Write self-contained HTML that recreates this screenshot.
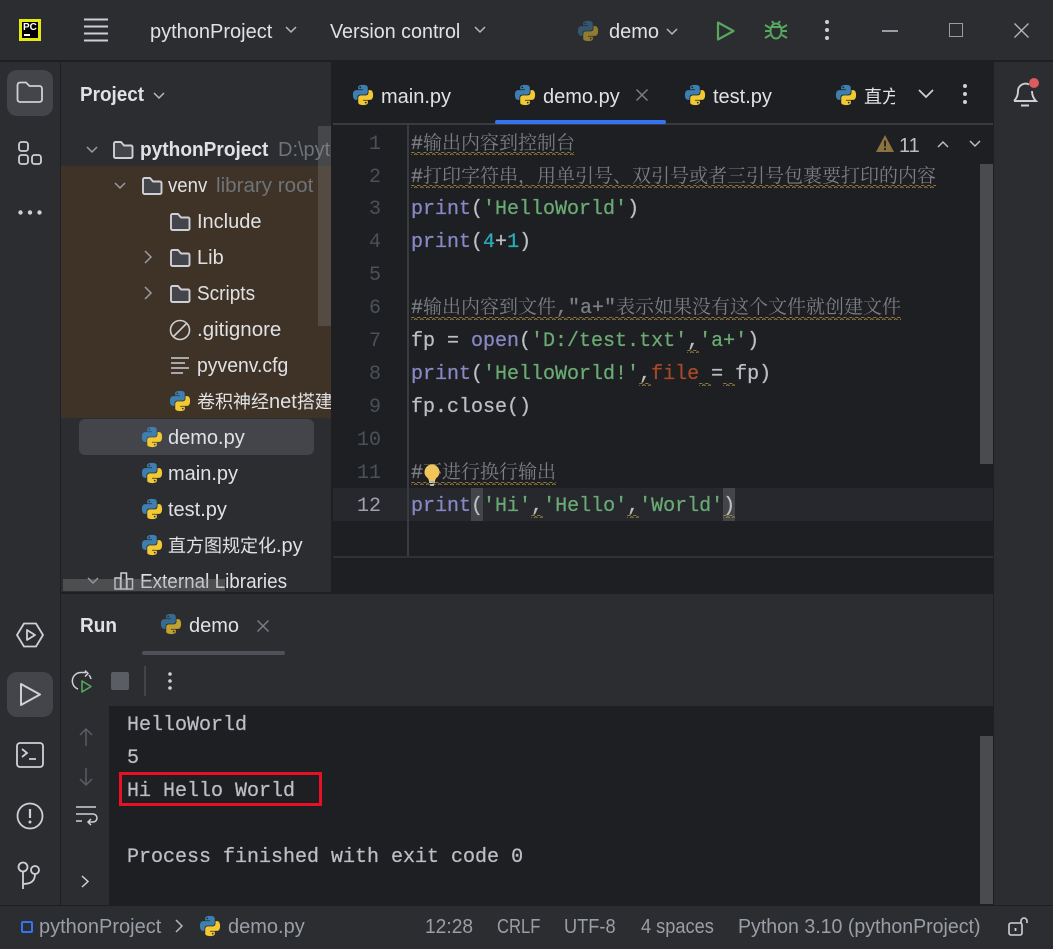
<!DOCTYPE html>
<html><head><meta charset="utf-8"><style>
html,body{margin:0;padding:0;background:#2b2d30;}
#r{position:relative;width:1053px;height:949px;overflow:hidden;background:#2b2d30;font-family:"Liberation Sans","Noto Sans CJK SC",sans-serif;font-size:20px;color:#dfe1e5;}
.a{position:absolute;}
.t{position:absolute;white-space:nowrap;height:24px;line-height:24px;margin-top:1px;transform-origin:0 0;}
.t b{font-weight:normal;font-size:18px;line-height:0;}
.c{position:absolute;left:411px;height:33px;line-height:33px;margin-top:1px;white-space:pre;font-family:"Liberation Mono",monospace;font-size:20px;color:#bcbec4;-webkit-text-stroke:.25px currentColor;}
.c i{font-style:normal;font-family:"Noto Serif CJK SC","Noto Sans CJK SC",serif;font-size:19px;line-height:0;-webkit-text-stroke:0;}
.m{color:#7a7e85;}.p{color:#8888c6;}.s{color:#6aab73;}.n{color:#2aacb8;}.f{color:#aa4926;}
.l{position:absolute;left:333px;width:48px;text-align:right;height:33px;line-height:33px;margin-top:1px;font-family:"Liberation Mono",monospace;font-size:20px;color:#4b5059;}
.o{position:absolute;left:127px;height:33px;line-height:33px;margin-top:1px;white-space:pre;font-family:"Liberation Mono",monospace;font-size:20px;color:#bcbec4;-webkit-text-stroke:.25px currentColor;}
svg{position:absolute;overflow:visible;}
.g{color:#6f737a;}
.st{color:#9a9ea6;}
</style></head><body><div id="r">
<svg width="0" height="0" style="left:0;top:0"><defs>
<symbol id="py" viewBox="0 0 24 24"><path fill="#3d7fb0" d="M11.9 1C6.4 1 6.7 3.4 6.7 3.4v2.5h5.3v.8H4.6S1 6.3 1 11.9s3.1 5.4 3.1 5.4H6v-2.6s-.1-3.1 3.1-3.1h5.2s2.9 0 2.9-2.9V3.9S17.7 1 11.9 1zM9 2.7a.95.95 0 1 1 0 1.9.95.95 0 0 1 0-1.9z"/><path fill="#f2c932" d="M12.1 23c5.5 0 5.2-2.4 5.2-2.4v-2.5H12v-.8h7.4s3.6.4 3.6-5.2-3.1-5.4-3.1-5.4H18v2.6s.1 3.1-3.1 3.1H9.7s-2.9 0-2.9 2.9v4.8S6.3 23 12.1 23zM15 21.3a.95.95 0 1 1 0-1.9.95.95 0 0 1 0 1.9z"/></symbol>
<symbol id="fo" viewBox="0 0 22 20"><path d="M2 3.500a1.500 1.500 0 0 1 1.500-1.500h5.500l3 3.500h7a1.500 1.500 0 0 1 1.500 1.500v9.500a1.500 1.500 0 0 1-1.500 1.500H3.500a1.500 1.500 0 0 1-1.500-1.500z" fill="#43454a" stroke="#ced0d6" stroke-width="1.900" stroke-linejoin="round"/></symbol>
<pattern id="sq" width="6" height="3" patternUnits="userSpaceOnUse"><path d="M0 2.4Q1.5 -.4 3 1.5T6 2.4" fill="none" stroke="#a3843c" stroke-width="1"/></pattern>
</defs></svg>

<!-- title bar -->
<div class="a" style="left:0;top:60px;width:1053px;height:2px;background:#1e1f22"></div>
<div class="a" style="left:19px;top:19px;width:22px;height:22px;background:#e4ea10"></div>
<div class="a" style="left:22px;top:22px;width:16px;height:16px;background:#000"></div>
<div class="t" style="left:23px;top:14.500px;font-size:10px;font-weight:bold;color:#fff">PC</div>
<div class="a" style="left:24px;top:34px;width:6px;height:1.500px;background:#fff"></div>
<svg style="left:84px;top:18px" width="24" height="24"><path d="M0 1.500h24M0 8.500h24M0 15.500h24M0 22.500h24" stroke="#ced0d6" stroke-width="2"/></svg>
<div class="t" style="left:150px;top:19px">pythonProject</div>
<svg style="left:285px;top:26px" width="12" height="8"><path d="M1 1l5 5 5-5" fill="none" stroke="#b4b8bf" stroke-width="1.500"/></svg>
<div class="t" style="left:330px;top:19px;transform:scaleX(.985)">Version control</div>
<svg style="left:474px;top:26px" width="12" height="8"><path d="M1 1l5 5 5-5" fill="none" stroke="#b4b8bf" stroke-width="1.500"/></svg>
<svg style="left:577px;top:20px;opacity:.5" width="22" height="22"><use href="#py"/></svg>
<div class="t" style="left:609px;top:19px">demo</div>
<svg style="left:666px;top:28px" width="12" height="8"><path d="M1 1l5 5 5-5" fill="none" stroke="#b4b8bf" stroke-width="1.500"/></svg>
<svg style="left:716px;top:20px" width="20" height="22"><path d="M2 2.500v17l15.500-8.500z" fill="none" stroke="#57a75f" stroke-width="2.200" stroke-linejoin="round"/></svg>
<svg style="left:764px;top:19px" width="24" height="22"><g fill="none" stroke="#57a75f" stroke-width="2"><ellipse cx="12" cy="12" rx="5.500" ry="7.500"/><path d="M7 8h10M8 2l2 3M16 2l-2 3M1 6l5 3M23 6l-5 3M1 12h5M23 12h-5M1 19l5-3M23 19l-5-3"/></g></svg>
<svg style="left:824px;top:20px" width="6" height="20"><circle cx="3" cy="2" r="2" fill="#ced0d6"/><circle cx="3" cy="10" r="2" fill="#ced0d6"/><circle cx="3" cy="18" r="2" fill="#ced0d6"/></svg>
<div class="a" style="left:882px;top:30px;width:16px;height:1.500px;background:#9a9da3"></div>
<div class="a" style="left:949px;top:23px;width:12px;height:12px;border:1.500px solid #9a9da3"></div>
<svg style="left:1014px;top:23px" width="15" height="15"><path d="M.5.5l14 14M14.500.5l-14 14" stroke="#b0b3b8" stroke-width="1.400"/></svg>

<!-- left strip -->
<div class="a" style="left:60px;top:62px;width:1px;height:844px;background:#1e1f22"></div>
<div class="a" style="left:7px;top:70px;width:46px;height:46px;border-radius:10px;background:#43454a"></div>
<svg style="left:16px;top:81px" width="28" height="24"><path d="M1.500 4a2.500 2.500 0 0 1 2.500-2.500h6l3.500 3.500h10a2.500 2.500 0 0 1 2.500 2.500v11a2.500 2.500 0 0 1-2.500 2.500H4a2.500 2.500 0 0 1-2.500-2.500z" fill="none" stroke="#ced0d6" stroke-width="1.800"/></svg>
<svg style="left:18px;top:141px" width="24" height="24"><g fill="none" stroke="#ced0d6" stroke-width="1.800"><rect x="1" y="1" width="9" height="9" rx="2.500"/><rect x="1" y="14" width="9" height="9" rx="2.500"/><rect x="14" y="14" width="9" height="9" rx="2.500"/></g></svg>
<svg style="left:18px;top:210px" width="24" height="5"><circle cx="2.500" cy="2.500" r="2.200" fill="#ced0d6"/><circle cx="12" cy="2.500" r="2.200" fill="#ced0d6"/><circle cx="21.500" cy="2.500" r="2.200" fill="#ced0d6"/></svg>
<svg style="left:16px;top:622px" width="28" height="26"><path d="M8 1.500h12L27 13l-7 11.500H8L1 13z" fill="none" stroke="#ced0d6" stroke-width="1.800" stroke-linejoin="round"/><path d="M11 8v10l8-5z" fill="none" stroke="#ced0d6" stroke-width="1.800" stroke-linejoin="round"/></svg>
<div class="a" style="left:7px;top:672px;width:46px;height:45px;border-radius:10px;background:#43454a"></div>
<svg style="left:19px;top:682px" width="24" height="26"><path d="M2 2v21l19-10.500z" fill="none" stroke="#ced0d6" stroke-width="2" stroke-linejoin="round"/></svg>
<svg style="left:16px;top:742px" width="28" height="26"><rect x="1" y="1" width="26" height="24" rx="3" fill="none" stroke="#ced0d6" stroke-width="1.800"/><path d="M6 7l5 4-5 4M13 17h7" fill="none" stroke="#ced0d6" stroke-width="1.800"/></svg>
<svg style="left:16px;top:802px" width="28" height="28"><circle cx="14" cy="14" r="12.500" fill="none" stroke="#ced0d6" stroke-width="1.800"/><path d="M14 7v9" stroke="#ced0d6" stroke-width="2.200"/><circle cx="14" cy="20" r="1.500" fill="#ced0d6"/></svg>
<svg style="left:17px;top:861px" width="26" height="30"><g fill="none" stroke="#ced0d6" stroke-width="1.800"><circle cx="6" cy="6" r="4.500"/><circle cx="18" cy="9" r="4"/><path d="M6 11v17M6 23c8 0 12-3 12-10"/></g></svg>

<!-- project panel -->
<div class="a" id="pj" style="left:61px;top:62px;width:270px;height:530px;overflow:hidden;background:#2b2d30">
<div class="a" style="left:0;top:104px;width:270px;height:252px;background:#3f3226"></div>
<div class="a" style="left:18px;top:357px;width:235px;height:36px;border-radius:6px;background:#43454a"></div>
<div class="t" style="left:19px;top:20px;font-weight:bold;transform:scaleX(.945)">Project</div>
<svg style="left:92px;top:30px" width="12" height="8"><path d="M1 1l5 5 5-5" fill="none" stroke="#b4b8bf" stroke-width="1.500"/></svg>
<svg style="left:25px;top:84px" width="12" height="8"><path d="M1 1l5 5 5-5" fill="none" stroke="#9a9da3" stroke-width="1.500"/></svg>
<svg style="left:51px;top:78px" width="22" height="20"><use href="#fo"/></svg>
<div class="t" style="left:79px;top:75px;font-weight:bold;transform:scaleX(.955)">pythonProject</div>
<div class="t g" style="left:217px;top:75px">D:\pyt</div>
<svg style="left:53px;top:120px" width="12" height="8"><path d="M1 1l5 5 5-5" fill="none" stroke="#9a9da3" stroke-width="1.500"/></svg>
<svg style="left:80px;top:114px" width="22" height="20"><use href="#fo"/></svg>
<div class="t" style="left:107px;top:111px;transform:scaleX(.93)">venv</div>
<div class="t g" style="left:155px;top:111px;transform:scaleX(1.03)">library root</div>
<svg style="left:108px;top:150px" width="22" height="20"><use href="#fo"/></svg>
<div class="t" style="left:136px;top:147px">Include</div>
<svg style="left:83px;top:188px" width="8" height="14"><path d="M1 1l6 6-6 6" fill="none" stroke="#9a9da3" stroke-width="1.500"/></svg>
<svg style="left:108px;top:186px" width="22" height="20"><use href="#fo"/></svg>
<div class="t" style="left:136px;top:183px">Lib</div>
<svg style="left:83px;top:224px" width="8" height="14"><path d="M1 1l6 6-6 6" fill="none" stroke="#9a9da3" stroke-width="1.500"/></svg>
<svg style="left:108px;top:222px" width="22" height="20"><use href="#fo"/></svg>
<div class="t" style="left:136px;top:219px;transform:scaleX(.95)">Scripts</div>
<svg style="left:108px;top:257px" width="22" height="22"><circle cx="11" cy="11" r="9.500" fill="none" stroke="#ced0d6" stroke-width="1.600"/><path d="M4.500 17.500l13-13" stroke="#ced0d6" stroke-width="1.600"/></svg>
<div class="t" style="left:136px;top:255px;transform:scaleX(1.025)">.gitignore</div>
<svg style="left:109px;top:295px" width="20" height="18"><path d="M1 1h18M1 6h14M1 11h18M1 16h12" stroke="#ced0d6" stroke-width="1.500"/></svg>
<div class="t" style="left:136px;top:291px;transform:scaleX(.97)">pyvenv.cfg</div>
<svg style="left:108px;top:328px" width="22" height="22"><use href="#py"/></svg>
<div class="t" style="left:136px;top:327px"><b>卷积神经</b>net<b>搭建</b></div>
<svg style="left:80px;top:364px" width="22" height="22"><use href="#py"/></svg>
<div class="t" style="left:107px;top:363px">demo.py</div>
<svg style="left:80px;top:400px" width="22" height="22"><use href="#py"/></svg>
<div class="t" style="left:107px;top:399px">main.py</div>
<svg style="left:80px;top:436px" width="22" height="22"><use href="#py"/></svg>
<div class="t" style="left:107px;top:435px">test.py</div>
<svg style="left:80px;top:472px" width="22" height="22"><use href="#py"/></svg>
<div class="t" style="left:107px;top:471px"><b>直方图规定化</b>.py</div>
<svg style="left:26px;top:515px" width="12" height="8"><path d="M1 1l5 5 5-5" fill="none" stroke="#9a9da3" stroke-width="1.500"/></svg>
<svg style="left:53px;top:510px" width="20" height="18"><g fill="none" stroke="#ced0d6" stroke-width="1.500"><rect x="1" y="6" width="5.500" height="11"/><rect x="7" y="1" width="5.500" height="16"/><rect x="13" y="7" width="5.500" height="10"/></g></svg>
<div class="t" style="left:79px;top:507px;transform:scaleX(.945)">External Libraries</div>
<div class="a" style="left:257px;top:64px;width:13px;height:200px;background:rgba(140,140,140,.28)"></div>
<div class="a" style="left:2px;top:517px;width:162px;height:12px;background:rgba(140,140,140,.35)"></div>
</div>
<div class="a" style="left:331px;top:62px;width:2px;height:530px;background:#1e1f22"></div>

<!-- editor -->
<div class="a" id="ed" style="left:333px;top:62px;width:660px;height:530px;background:#1e1f22"></div>
<div class="a" style="left:333px;top:123px;width:660px;height:2px;background:#393b40"></div>
<div class="a" style="left:495px;top:120px;width:171px;height:4px;border-radius:2px;background:#3574f0"></div>
<svg style="left:352px;top:84px" width="22" height="22"><use href="#py"/></svg>
<div class="t" style="left:381px;top:84px">main.py</div>
<svg style="left:514px;top:84px" width="22" height="22"><use href="#py"/></svg>
<div class="t" style="left:543px;top:84px">demo.py</div>
<svg style="left:636px;top:89px" width="12" height="12"><path d="M.5.5l11 11M11.500.5l-11 11" stroke="#7a7e85" stroke-width="1.500"/></svg>
<svg style="left:684px;top:84px" width="22" height="22"><use href="#py"/></svg>
<div class="t" style="left:713px;top:84px">test.py</div>
<svg style="left:835px;top:84px" width="22" height="22"><use href="#py"/></svg>
<div class="a" style="left:864px;top:84px;width:31px;height:26px;overflow:hidden"><div class="t" style="left:0;top:0"><b>直方图规定化</b>.py</div></div>
<svg style="left:918px;top:89px" width="16" height="10"><path d="M1 1l7 7 7-7" fill="none" stroke="#ced0d6" stroke-width="1.700"/></svg>
<svg style="left:962px;top:84px" width="6" height="20"><circle cx="3" cy="2" r="2" fill="#ced0d6"/><circle cx="3" cy="10" r="2" fill="#ced0d6"/><circle cx="3" cy="18" r="2" fill="#ced0d6"/></svg>

<div class="a" style="left:333px;top:488px;width:660px;height:33px;background:#26282e"></div>
<div class="a" style="left:407px;top:125px;width:2px;height:431px;background:#393b40"></div>
<div class="a" style="left:333px;top:556px;width:660px;height:2px;background:#2f3134"></div>
<div class="a" style="left:471px;top:488px;width:12px;height:33px;background:#43454a"></div>
<div class="a" style="left:723px;top:488px;width:12px;height:33px;background:#43454a"></div>

<div class="l" style="top:127px">1</div><div class="l" style="top:160px">2</div><div class="l" style="top:192px">3</div><div class="l" style="top:225px">4</div><div class="l" style="top:258px">5</div><div class="l" style="top:291px">6</div><div class="l" style="top:324px">7</div><div class="l" style="top:357px">8</div><div class="l" style="top:390px">9</div><div class="l" style="top:423px">10</div><div class="l" style="top:456px">11</div><div class="l" style="top:489px;color:#a1a3ab">12</div>

<div class="c m" style="top:127px">#<i>输出内容到控制台</i></div>
<div class="c m" style="top:160px">#<i>打印字符串，用单引号、双引号或者三引号包裹要打印的内容</i></div>
<div class="c" style="top:192px"><span class="p">print</span>(<span class="s">'HelloWorld'</span>)</div>
<div class="c" style="top:225px"><span class="p">print</span>(<span class="n">4</span>+<span class="n">1</span>)</div>
<div class="c m" style="top:291px">#<i>输出内容到文件</i>,"a+"<i>表示如果没有这个文件就创建文件</i></div>
<div class="c" style="top:324px">fp = <span class="p">open</span>(<span class="s">'D:/test.txt'</span>,<span class="s">'a+'</span>)</div>
<div class="c" style="top:357px"><span class="p">print</span>(<span class="s">'HelloWorld!'</span>,<span class="f">file</span> = fp)</div>
<div class="c" style="top:390px">fp.close()</div>
<div class="c m" style="top:456px">#<i>不进行换行输出</i></div>
<div class="c" style="top:489px"><span class="p">print</span>(<span class="s">'Hi'</span>,<span class="s">'Hello'</span>,<span class="s">'World'</span>)</div>

<svg style="left:0;top:0" width="1053" height="949"><g fill="url(#sq)">
<rect x="411" y="152" width="163" height="3"/><rect x="411" y="185" width="525" height="3"/><rect x="411" y="317" width="490" height="3"/><rect x="411" y="482" width="145" height="3"/>
<rect x="687" y="350" width="12" height="3"/><rect x="639" y="383" width="12" height="3"/><rect x="699" y="383" width="12" height="3"/><rect x="723" y="383" width="12" height="3"/>
<rect x="531" y="515" width="12" height="3"/><rect x="627" y="515" width="12" height="3"/><rect x="723" y="515" width="12" height="3"/></g>
<circle cx="432" cy="472" r="7.500" fill="#f2c55c"/><path d="M428 478h8l-1 3h-6z" fill="#f2c55c"/><path d="M429 482h6M430 485h4" stroke="#dfe1e5" stroke-width="1.500"/></svg>

<div class="a" style="left:980px;top:164px;width:13px;height:300px;background:#4a4b4e"></div>
<svg style="left:876px;top:135px" width="18" height="17"><path d="M9 0L18 17H0z" fill="#8a7340"/><path d="M9 5.500v6M9 13v2" stroke="#1e1f22" stroke-width="1.800"/></svg>
<div class="t" style="left:899px;top:133px;color:#bcbec4">11</div>
<svg style="left:937px;top:140px" width="12" height="8"><path d="M1 7l5-5 5 5" fill="none" stroke="#bcbec4" stroke-width="1.500"/></svg>
<svg style="left:969px;top:140px" width="12" height="8"><path d="M1 1l5 5 5-5" fill="none" stroke="#bcbec4" stroke-width="1.500"/></svg>

<!-- right strip -->
<div class="a" style="left:993px;top:62px;width:1px;height:844px;background:#1e1f22"></div>
<svg style="left:1011px;top:78px" width="30" height="30"><path d="M3 23h22Q21 19 21 13M3 23Q7 19 7 13A7.500 7.500 0 0 1 18 6.500" fill="none" stroke="#ced0d6" stroke-width="1.900"/><path d="M10 27.500h8" stroke="#ced0d6" stroke-width="2"/><circle cx="23" cy="5" r="5" fill="#db5c5c"/></svg>

<!-- run panel -->
<div class="a" style="left:61px;top:592px;width:932px;height:2px;background:#1e1f22"></div>
<div class="t" style="left:80px;top:613px;font-weight:bold;transform:scaleX(.95)">Run</div>
<svg style="left:160px;top:613px;opacity:.75" width="22" height="22"><use href="#py"/></svg>
<div class="t" style="left:189px;top:613px">demo</div>
<svg style="left:257px;top:620px" width="12" height="12"><path d="M.5.5l11 11M11.500.5l-11 11" stroke="#7a7e85" stroke-width="1.500"/></svg>
<div class="a" style="left:142px;top:651px;width:143px;height:4px;border-radius:2px;background:#4e5157"></div>
<svg style="left:71px;top:670px" width="24" height="24"><path d="M15 2.500h-5a8.500 8.500 0 0 0-3 16.500" fill="none" stroke="#ced0d6" stroke-width="1.500"/><path d="M14 .5l3 3-3 3M18 5a8 8 0 0 1 2 4" fill="none" stroke="#ced0d6" stroke-width="1.500"/><path d="M11 11v11l9-5.500z" fill="none" stroke="#57a75f" stroke-width="1.600" stroke-linejoin="round"/></svg>
<div class="a" style="left:111px;top:672px;width:18px;height:18px;border-radius:2px;background:#5a5d63"></div>
<div class="a" style="left:144px;top:666px;width:2px;height:30px;background:#43454a"></div>
<svg style="left:167px;top:672px" width="6" height="18"><circle cx="3" cy="2" r="1.800" fill="#ced0d6"/><circle cx="3" cy="9" r="1.800" fill="#ced0d6"/><circle cx="3" cy="16" r="1.800" fill="#ced0d6"/></svg>
<div class="a" style="left:109px;top:706px;width:884px;height:200px;background:#1e1f22"></div>
<svg style="left:79px;top:728px" width="14" height="18"><path d="M7 18V1M1 7l6-6 6 6" fill="none" stroke="#5a5d63" stroke-width="1.500"/></svg>
<svg style="left:79px;top:768px" width="14" height="18"><path d="M7 0v17M1 11l6 6 6-6" fill="none" stroke="#5a5d63" stroke-width="1.500"/></svg>
<svg style="left:75px;top:806px" width="22" height="19"><path d="M1 1h20M1 8h17a3.500 3.500 0 0 1 0 8h-5M1 15h6M16 13l-3 3 3 3" fill="none" stroke="#ced0d6" stroke-width="1.500"/></svg>
<svg style="left:81px;top:875px" width="8" height="13"><path d="M1 1l6 5.500-6 5.500" fill="none" stroke="#ced0d6" stroke-width="1.500"/></svg>
<div class="o" style="top:708px">HelloWorld</div>
<div class="o" style="top:741px">5</div>
<div class="o" style="top:774px">Hi Hello World</div>
<div class="o" style="top:840px">Process finished with exit code 0</div>
<div class="a" style="left:119px;top:772px;width:197px;height:28px;border:3px solid #e81123"></div>
<div class="a" style="left:980px;top:736px;width:13px;height:168px;background:#4a4b4e"></div>

<!-- status bar -->
<div class="a" style="left:0;top:905px;width:1053px;height:1px;background:#1e1f22"></div>
<div class="a" style="left:21px;top:921px;width:8px;height:8px;border:2px solid #3574f0;border-radius:2px"></div>
<div class="t st" style="left:39px;top:914px">pythonProject</div>
<svg style="left:175px;top:919px" width="8" height="14"><path d="M1 1l6 6-6 6" fill="none" stroke="#b4b8bf" stroke-width="1.500"/></svg>
<svg style="left:199px;top:915px" width="22" height="22"><use href="#py"/></svg>
<div class="t st" style="left:228px;top:914px">demo.py</div>
<div class="t st" style="left:425px;top:914px;transform:scaleX(.96)">12:28</div>
<div class="t st" style="left:497px;top:914px;transform:scaleX(.83)">CRLF</div>
<div class="t st" style="left:564px;top:914px;transform:scaleX(.91)">UTF-8</div>
<div class="t st" style="left:641px;top:914px;transform:scaleX(.91)">4 spaces</div>
<div class="t st" style="left:738px;top:914px;transform:scaleX(.978)">Python 3.10 (pythonProject)</div>
<svg style="left:1008px;top:917px" width="22" height="20"><rect x="1" y="6" width="13" height="12" rx="2" fill="none" stroke="#ced0d6" stroke-width="1.600"/><path d="M7.500 11v3" stroke="#ced0d6" stroke-width="1.800"/><path d="M13 6V4a3 3 0 0 1 6 0v2" fill="none" stroke="#ced0d6" stroke-width="1.600"/></svg>
</div></body></html>
